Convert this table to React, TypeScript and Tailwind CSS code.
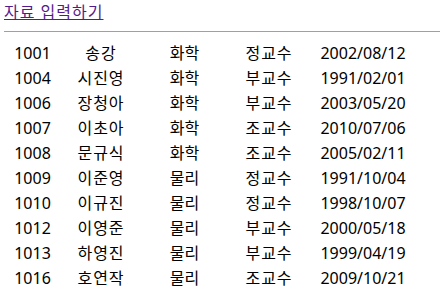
const rows = [
  ['1001', '송강', '화학', '정교수', '2002/08/12'],
  ['1004', '시진영', '화학', '부교수', '1991/02/01'],
  ['1006', '장청아', '화학', '부교수', '2003/05/20'],
  ['1007', '이초아', '화학', '조교수', '2010/07/06'],
  ['1008', '문규식', '화학', '조교수', '2005/02/11'],
  ['1009', '이준영', '물리', '정교수', '1991/10/04'],
  ['1010', '이규진', '물리', '정교수', '1998/10/07'],
  ['1012', '이영준', '물리', '부교수', '2000/05/18'],
  ['1013', '하영진', '물리', '부교수', '1999/04/19'],
  ['1016', '호연작', '물리', '조교수', '2009/10/21'],
]

export default function App() {
  return (
    <div className="w-[444px] h-[290px] overflow-hidden bg-white px-1 font-['Noto_Sans','Noto_Sans_CJK_KR',sans-serif] text-[16px] text-black">
      <div className="h-6 leading-6">
        <a href="#" className="text-[#551a8b] underline tracking-[1px]">
          자료 입력하기
        </a>
      </div>
      <hr className="mt-[7px] border-t border-[#a0a0a0]" />
      <div className="mt-[9px] pl-[6px]">
        {rows.map((r) => (
          <div key={r[0]} className="grid grid-cols-[45px_92px_75px_94px_94px] h-[25px] leading-[25px] text-center">
            {r.map((c, i) => (
              <span key={i} className={i === 1 || i === 3 ? 'tracking-[1px]' : ''}>{c}</span>
            ))}
          </div>
        ))}
      </div>
    </div>
  )
}
